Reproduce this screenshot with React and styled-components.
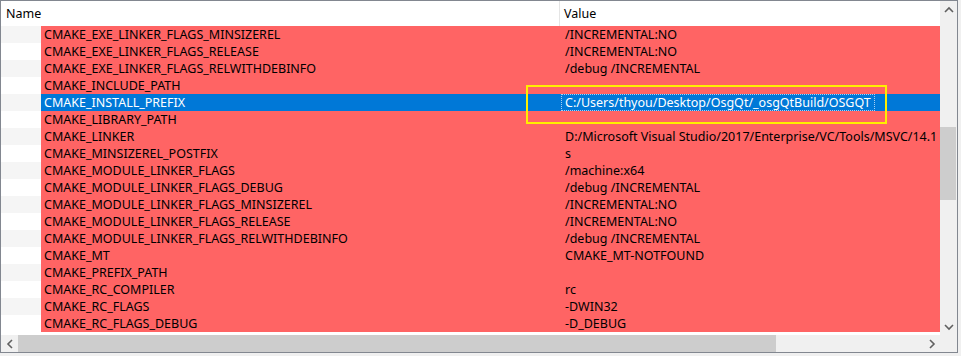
import React from "react";
import styled, { createGlobalStyle } from "styled-components";

const rows = [
  ["CMAKE_EXE_LINKER_FLAGS_MINSIZEREL", "/INCREMENTAL:NO"],
  ["CMAKE_EXE_LINKER_FLAGS_RELEASE", "/INCREMENTAL:NO"],
  ["CMAKE_EXE_LINKER_FLAGS_RELWITHDEBINFO", "/debug /INCREMENTAL"],
  ["CMAKE_INCLUDE_PATH", ""],
  ["CMAKE_INSTALL_PREFIX", "C:/Users/thyou/Desktop/OsgQt/_osgQtBuild/OSGQT"],
  ["CMAKE_LIBRARY_PATH", ""],
  ["CMAKE_LINKER", "D:/Microsoft Visual Studio/2017/Enterprise/VC/Tools/MSVC/14.1"],
  ["CMAKE_MINSIZEREL_POSTFIX", "s"],
  ["CMAKE_MODULE_LINKER_FLAGS", "/machine:x64"],
  ["CMAKE_MODULE_LINKER_FLAGS_DEBUG", "/debug /INCREMENTAL"],
  ["CMAKE_MODULE_LINKER_FLAGS_MINSIZEREL", "/INCREMENTAL:NO"],
  ["CMAKE_MODULE_LINKER_FLAGS_RELEASE", "/INCREMENTAL:NO"],
  ["CMAKE_MODULE_LINKER_FLAGS_RELWITHDEBINFO", "/debug /INCREMENTAL"],
  ["CMAKE_MT", "CMAKE_MT-NOTFOUND"],
  ["CMAKE_PREFIX_PATH", ""],
  ["CMAKE_RC_COMPILER", "rc"],
  ["CMAKE_RC_FLAGS", "-DWIN32"],
  ["CMAKE_RC_FLAGS_DEBUG", "-D_DEBUG"],
];

const SELECTED = 4;

const Chevron = ({ dir }) => {
  const pts = {
    up: "1,6 5,2 9,6",
    down: "1,2 5,6 9,2",
    left: "6,1 2,5 6,9",
    right: "2,1 6,5 2,9",
  }[dir];
  const w = dir === "up" || dir === "down" ? 10 : 8;
  const h = dir === "up" || dir === "down" ? 8 : 10;
  return (
    <svg width={w} height={h} viewBox={`0 0 ${w} ${h}`}>
      <polyline points={pts} fill="none" stroke="#606060" strokeWidth="1.6" />
    </svg>
  );
};

const App = () => {
  return (
    <>
      <GlobalStyle />
      <Stage>
        <Frame>
          <View>
            <Header>
              <HeaderCell $w={559}>Name</HeaderCell>
              <HeaderCell>Value</HeaderCell>
            </Header>
            {rows.map(([name, value], i) => (
              <Row key={name}>
                <Gutter $alt={i % 2 === 0} />
                <NameCell $sel={i === SELECTED}>{name}</NameCell>
                <ValueCell $sel={i === SELECTED}>
                  {i === SELECTED ? <Focus>{value}</Focus> : value}
                </ValueCell>
              </Row>
            ))}
          </View>
          <VScroll>
            <ArrowBtn>
              <Chevron dir="up" />
            </ArrowBtn>
            <VTrack>
              <VThumb />
            </VTrack>
            <ArrowBtn>
              <Chevron dir="down" />
            </ArrowBtn>
          </VScroll>
          <HScroll>
            <ArrowBtn>
              <Chevron dir="left" />
            </ArrowBtn>
            <HTrack>
              <HThumb />
            </HTrack>
            <ArrowBtn>
              <Chevron dir="right" />
            </ArrowBtn>
          </HScroll>
          <Corner />
        </Frame>
        <Highlight />
      </Stage>
    </>
  );
};

const GlobalStyle = createGlobalStyle`
  html, body {
    margin: 0;
    padding: 0;
    background: #ffffff;
  }
  body {
    font-family: "Noto Sans", "Liberation Sans", sans-serif;
    font-size: 12.5px;
    color: #000;
  }
`;

const Stage = styled.div`
  position: relative;
  width: 961px;
  height: 356px;
  background: #f0f0f0;
`;

const Frame = styled.div`
  display: grid;
  grid-template-columns: 939px 17px;
  grid-template-rows: 334px 17px;
  width: 956px;
  border: 1px solid #828790;
  background: #ffffff;
`;

const View = styled.div`
  overflow: hidden;
  background: #ffffff;
`;

const Header = styled.div`
  display: flex;
  height: 25px;
  background: #ffffff;
`;

const HeaderCell = styled.div`
  display: flex;
  align-items: center;
  flex: ${(p) => (p.$w ? `0 0 ${p.$w}px` : "1")};
  padding-left: ${(p) => (p.$w ? "5px" : "4px")};
  border-right: ${(p) => (p.$w ? "1px solid #e5e5e5" : "none")};
  box-sizing: border-box;
  white-space: nowrap;
`;

const Row = styled.div`
  display: flex;
  height: 17px;
  line-height: 17px;
  white-space: nowrap;
`;

const Gutter = styled.div`
  flex: 0 0 40px;
  background: ${(p) => (p.$alt ? "#f5f5f5" : "#ffffff")};
`;

const NameCell = styled.div`
  flex: 0 0 519px;
  box-sizing: border-box;
  padding-left: 3px;
  overflow: hidden;
  background: ${(p) => (p.$sel ? "#0078d7" : "#ff6464")};
  color: ${(p) => (p.$sel ? "#ffffff" : "#000000")};
`;

const ValueCell = styled.div`
  flex: 0 0 600px;
  box-sizing: border-box;
  padding-left: ${(p) => (p.$sel ? "1px" : "5px")};
  background: ${(p) => (p.$sel ? "#0078d7" : "#ff6464")};
  color: ${(p) => (p.$sel ? "#ffffff" : "#000000")};
`;

const Focus = styled.span`
  display: inline-block;
  box-sizing: border-box;
  height: 17px;
  line-height: 15px;
  padding: 0 3px;
  border: 1px dotted #a8d0f2;
`;

const VScroll = styled.div`
  display: flex;
  flex-direction: column;
  background: #f0f0f0;
`;

const HScroll = styled.div`
  display: flex;
  background: #f0f0f0;
`;

const ArrowBtn = styled.div`
  flex: 0 0 17px;
  height: 17px;
  display: flex;
  align-items: center;
  justify-content: center;
`;

const VTrack = styled.div`
  flex: 1;
  padding-top: 109px;
`;

const VThumb = styled.div`
  width: 16px;
  height: 73px;
  background: #cdcdcd;
`;

const HTrack = styled.div`
  flex: 1;
  display: flex;
  align-items: stretch;
`;

const HThumb = styled.div`
  width: 758px;
  background: #cdcdcd;
`;

const Corner = styled.div`
  background: #f0f0f0;
`;

const Highlight = styled.div`
  position: absolute;
  left: 526px;
  top: 85px;
  width: 361px;
  height: 39px;
  box-sizing: border-box;
  border: 2px solid #ffee00;
  pointer-events: none;
`;

export default App;
